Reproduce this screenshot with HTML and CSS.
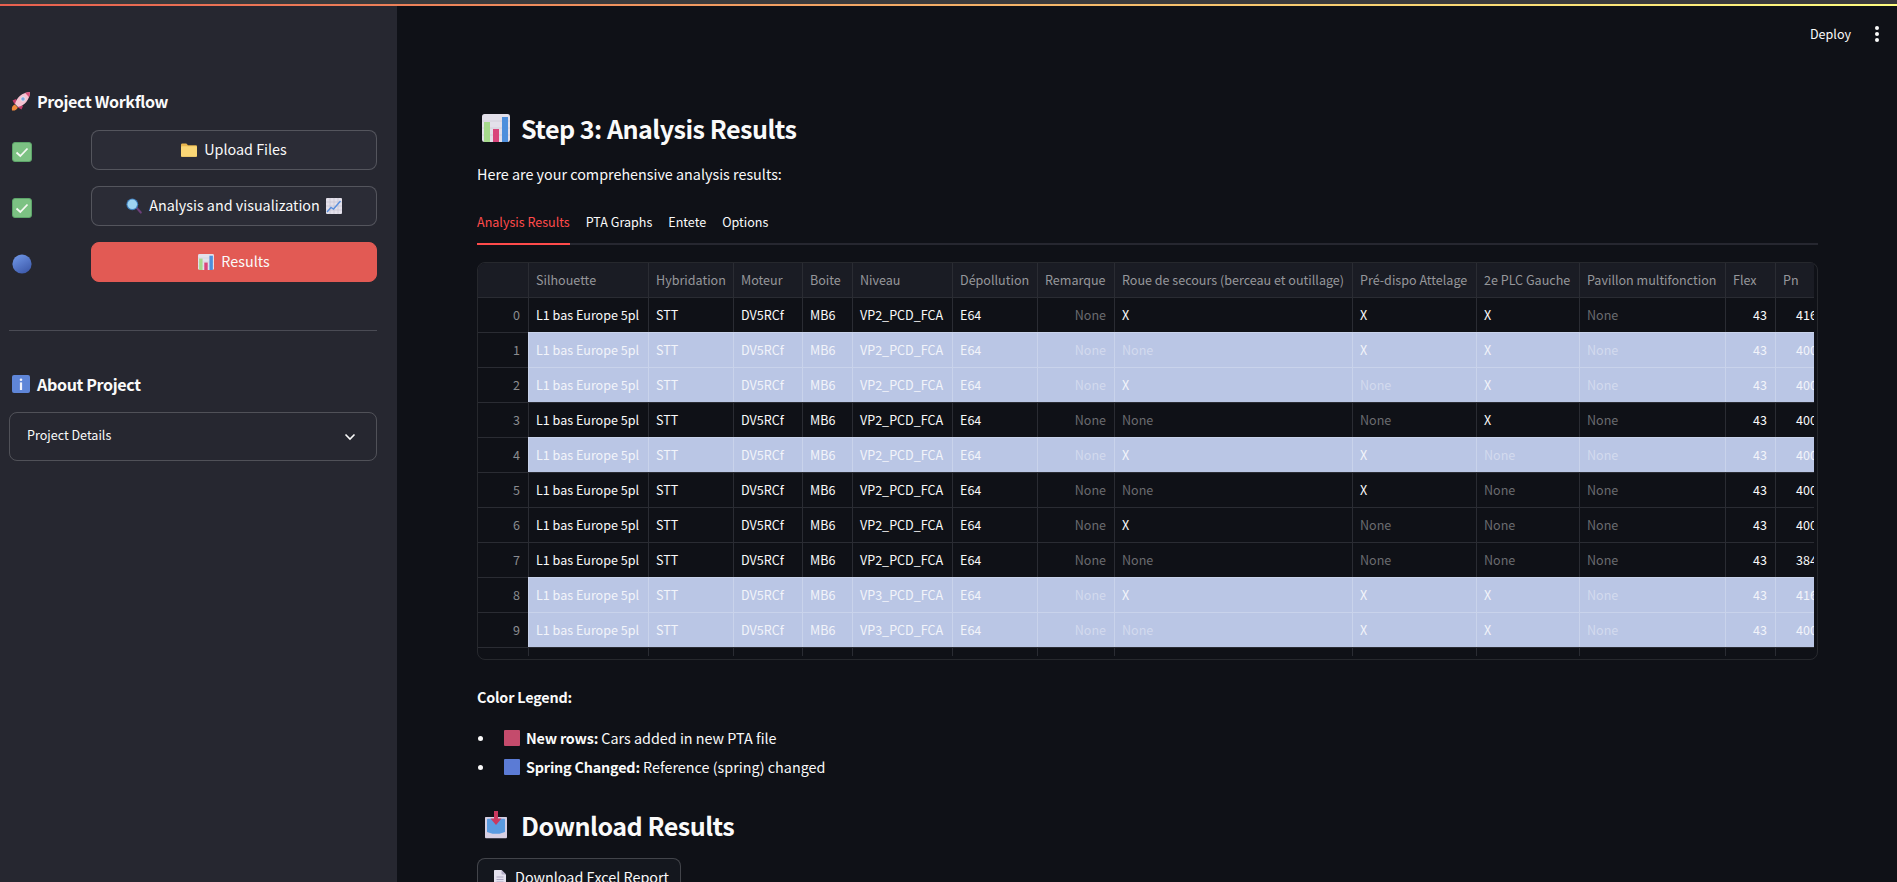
FILE: index.html
```html
<!DOCTYPE html>
<html lang="en">
  <head>
    <meta charset="UTF-8">
    <title>Step 3: Analysis Results</title>
    <link rel="stylesheet" href="styles.css">
  </head>
  <body>
    <!-- emoji drawn once, reused with <use> -->
    <svg class="icon-defs" width="0" height="0">
      <defs>
        <linearGradient id="orb" x1="0.2" y1="0" x2="0.8" y2="1">
          <stop offset="0" stop-color="#6f96e6"/>
          <stop offset="1" stop-color="#3b57a8"/>
        </linearGradient>
      </defs>
      <symbol id="i-rocket" viewBox="0 0 20 20">
        <path d="M1 19.500c-.6-2.800.4-5 2.800-6l3 3C6 18.800 3.800 19.900 1 19.500z" fill="#ef8a3c"/>
        <path d="M5 8 1.500 9.500l2 3.500 3-1zM12 15l-1.500 3.500-3.500-2 1-3z" fill="#c43d6a"/>
        <path d="M4 13C5.500 6.500 11 1.500 19 1c-.4 8-5.500 13.500-12 15z" fill="#f6c3d2"/>
        <path d="M14 1.800 19 1c-.1 1.900-.4 3.600-.9 5.200z" fill="#d9527c"/>
        <circle cx="12" cy="8" r="2.200" fill="#7fa8e0" stroke="#eee" stroke-width=".8"/>
      </symbol>
      <symbol id="i-check" viewBox="0 0 20 20">
        <rect x=".5" y=".5" width="19" height="19" rx="2.500" fill="#7cc283" stroke="#5da56a"/>
        <path d="M4.500 10.500 8.300 14 15.500 6.500" fill="none" stroke="#f4f8f2" stroke-width="1.800"/>
      </symbol>
      <symbol id="i-folder" viewBox="0 0 16 14">
        <path d="M0 2c0-.8.500-1.400 1.300-1.400h4L7 2.200h7.700c.8 0 1.300.5 1.300 1.300v9c0 .8-.5 1.300-1.300 1.300H1.300C.5 13.800 0 13.300 0 12.500z" fill="#e9b64e"/>
        <path d="M0 4.600c0-.8.500-1.300 1.300-1.300h13.400c.8 0 1.300.5 1.300 1.300v7.900c0 .8-.5 1.300-1.300 1.300H1.300C.5 13.800 0 13.300 0 12.500z" fill="#fad675"/>
      </symbol>
      <symbol id="i-search" viewBox="0 0 16 16">
        <path d="M9.500 10 11 8.800l4.600 5c.4.500.4 1-.1 1.500s-1 .4-1.500 0z" fill="#6b3f79"/>
        <circle cx="6.300" cy="6.300" r="5.900" fill="#3f7fbd"/>
        <circle cx="6.300" cy="6.300" r="4.800" fill="#9ed4f2"/>
      </symbol>
      <symbol id="i-trend" viewBox="0 0 16 16">
        <rect width="16" height="16" rx="1" fill="#e3e0ea"/>
        <path d="M0 4h16M0 8h16M0 12h16M4 0v16M8 0v16M12 0v16" stroke="#c3c0d0" stroke-width=".6"/>
        <path d="M1 14 5 9.500 7.500 11 14.500 3" fill="none" stroke="#5a8fdc" stroke-width="1.400"/>
      </symbol>
      <symbol id="i-bars" viewBox="0 0 28 28">
        <rect width="28" height="28" rx="2.500" fill="#e3e0ea"/>
        <path d="M0 7h28M0 14h28M0 21h28" stroke="#cfccd8" stroke-width=".8"/>
        <rect x="2" y="8" width="6" height="20" fill="#a6d98c"/>
        <rect x="11" y="15" width="6" height="13" fill="#d9467c"/>
        <rect x="20" y="3" width="6" height="25" fill="#4e8fdc"/>
      </symbol>
      <symbol id="i-info" viewBox="-1 -1 20 20">
        <rect width="18" height="18" rx="2" fill="#5f86d8"/>
        <circle cx="9" cy="4.800" r="1.300" fill="#f2f3fb"/>
        <rect x="7.900" y="7.400" width="2.200" height="7.600" fill="#f2f3fb"/>
      </symbol>
      <symbol id="i-tray" viewBox="0 -1 28 28">
        <path d="M3 6c0-.6.400-1 1-1h20c.6 0 1 .4 1 1v19c0 .8-.5 1.300-1.300 1.300H4.300C3.500 26.300 3 25.800 3 25z" fill="#d6cfe3"/>
        <path d="M5 7.500c0-.5.300-.8.800-.8h16.400c.5 0 .8.300.8.800V20l-5.500 1.800h-7L5 20z" fill="#5a9be0"/>
        <path d="M12 -1h4v7.500h3.500L14 13 8.500 6.500H12z" fill="#c9395f"/>
      </symbol>
      <symbol id="i-doc" viewBox="0 0 12 16">
        <path d="M0 1c0-.6.400-1 1-1h6.500L12 4.500V15c0 .6-.4 1-1 1H1c-.6 0-1-.4-1-1z" fill="#e4e1ee"/>
        <path d="M7.500 0 12 4.500H8.500c-.6 0-1-.4-1-1z" fill="#b5afc9"/>
        <path d="M2.500 7h7M2.500 9.500h7M2.500 12h7" stroke="#aca6c2"/>
      </symbol>
    </svg>

    <div class="browser-strip"></div>
    <div class="decoration"></div>

    <div class="app">
      <aside class="sidebar">
        <h3 class="side-title"><svg class="emoji-sm"><use href="#i-rocket"/></svg>Project Workflow</h3>

        <div class="steps">
          <svg class="step-status"><use href="#i-check"/></svg>
          <a class="btn"><svg class="emoji-btn"><use href="#i-folder"/></svg>Upload Files</a>

          <svg class="step-status"><use href="#i-check"/></svg>
          <a class="btn"><svg class="emoji-btn"><use href="#i-search"/></svg>Analysis and visualization<svg class="emoji-btn after"><use href="#i-trend"/></svg></a>

          <svg class="step-status" viewBox="0 0 20 20"><circle cx="10" cy="10" r="9.600" fill="url(#orb)"/></svg>
          <a class="btn btn-primary"><svg class="emoji-btn"><use href="#i-bars"/></svg>Results</a>
        </div>

        <hr class="side-rule">

        <h3 class="side-title about"><svg class="emoji-sm"><use href="#i-info"/></svg>About Project</h3>
        <div class="expander">
          <span class="expander-label">Project Details</span>
          <svg class="chevron" viewBox="0 0 12 8"><path d="M1.500 1.500 6 6l4.500-4.500" fill="none" stroke="#fafafa" stroke-width="1.600"/></svg>
        </div>
      </aside>

      <main class="content">
        <div class="topbar">
          <span class="deploy">Deploy</span>
          <svg class="kebab" viewBox="0 0 6 18"><circle cx="3" cy="3" r="2"/><circle cx="3" cy="9" r="2"/><circle cx="3" cy="15" r="2"/></svg>
        </div>

        <h2 class="page-title"><svg class="emoji-lg"><use href="#i-bars"/></svg>Step 3: Analysis Results</h2>
        <p class="lead">Here are your comprehensive analysis results:</p>

        <div class="tabs">
          <span class="tab active">Analysis Results</span>
          <span class="tab">PTA Graphs</span>
          <span class="tab">Entete</span>
          <span class="tab">Options</span>
        </div>

        <div class="grid-frame">
          <div class="grid-clip">
            <table class="grid">
              <colgroup>
                <col class="c-idx"><col class="c-sil"><col class="c-hyb"><col class="c-mot"><col class="c-boi"><col class="c-niv"><col class="c-dep"><col class="c-rem"><col class="c-rou"><col class="c-pre"><col class="c-plc"><col class="c-pav"><col class="c-flx"><col class="c-pn">
              </colgroup>
              <thead>
                <tr><th class="idx"></th><th>Silhouette</th><th>Hybridation</th><th>Moteur</th><th>Boite</th><th>Niveau</th><th>Dépollution</th><th>Remarque</th><th>Roue de secours (berceau et outillage)</th><th>Pré-dispo Attelage</th><th>2e PLC Gauche</th><th>Pavillon multifonction</th><th>Flex</th><th>Pn</th></tr>
              </thead>
              <tbody>
                <tr><td class="idx">0</td><td>L1 bas Europe 5pl</td><td>STT</td><td>DV5RCf</td><td>MB6</td><td>VP2_PCD_FCA</td><td>E64</td><td class="none r">None</td><td>X</td><td>X</td><td>X</td><td class="none">None</td><td class="r">43</td><td class="r">416</td></tr>
                <tr class="hl"><td class="idx">1</td><td>L1 bas Europe 5pl</td><td>STT</td><td>DV5RCf</td><td>MB6</td><td>VP2_PCD_FCA</td><td>E64</td><td class="none r">None</td><td class="none">None</td><td>X</td><td>X</td><td class="none">None</td><td class="r">43</td><td class="r">400</td></tr>
                <tr class="hl"><td class="idx">2</td><td>L1 bas Europe 5pl</td><td>STT</td><td>DV5RCf</td><td>MB6</td><td>VP2_PCD_FCA</td><td>E64</td><td class="none r">None</td><td>X</td><td class="none">None</td><td>X</td><td class="none">None</td><td class="r">43</td><td class="r">400</td></tr>
                <tr><td class="idx">3</td><td>L1 bas Europe 5pl</td><td>STT</td><td>DV5RCf</td><td>MB6</td><td>VP2_PCD_FCA</td><td>E64</td><td class="none r">None</td><td class="none">None</td><td class="none">None</td><td>X</td><td class="none">None</td><td class="r">43</td><td class="r">400</td></tr>
                <tr class="hl"><td class="idx">4</td><td>L1 bas Europe 5pl</td><td>STT</td><td>DV5RCf</td><td>MB6</td><td>VP2_PCD_FCA</td><td>E64</td><td class="none r">None</td><td>X</td><td>X</td><td class="none">None</td><td class="none">None</td><td class="r">43</td><td class="r">400</td></tr>
                <tr><td class="idx">5</td><td>L1 bas Europe 5pl</td><td>STT</td><td>DV5RCf</td><td>MB6</td><td>VP2_PCD_FCA</td><td>E64</td><td class="none r">None</td><td class="none">None</td><td>X</td><td class="none">None</td><td class="none">None</td><td class="r">43</td><td class="r">400</td></tr>
                <tr><td class="idx">6</td><td>L1 bas Europe 5pl</td><td>STT</td><td>DV5RCf</td><td>MB6</td><td>VP2_PCD_FCA</td><td>E64</td><td class="none r">None</td><td>X</td><td class="none">None</td><td class="none">None</td><td class="none">None</td><td class="r">43</td><td class="r">400</td></tr>
                <tr><td class="idx">7</td><td>L1 bas Europe 5pl</td><td>STT</td><td>DV5RCf</td><td>MB6</td><td>VP2_PCD_FCA</td><td>E64</td><td class="none r">None</td><td class="none">None</td><td class="none">None</td><td class="none">None</td><td class="none">None</td><td class="r">43</td><td class="r">384</td></tr>
                <tr class="hl"><td class="idx">8</td><td>L1 bas Europe 5pl</td><td>STT</td><td>DV5RCf</td><td>MB6</td><td>VP3_PCD_FCA</td><td>E64</td><td class="none r">None</td><td>X</td><td>X</td><td>X</td><td class="none">None</td><td class="r">43</td><td class="r">416</td></tr>
                <tr class="hl"><td class="idx">9</td><td>L1 bas Europe 5pl</td><td>STT</td><td>DV5RCf</td><td>MB6</td><td>VP3_PCD_FCA</td><td>E64</td><td class="none r">None</td><td class="none">None</td><td>X</td><td>X</td><td class="none">None</td><td class="r">43</td><td class="r">400</td></tr>
                <tr class="filler"><td class="idx"></td><td></td><td></td><td></td><td></td><td></td><td></td><td></td><td></td><td></td><td></td><td></td><td></td><td></td></tr>
              </tbody>
            </table>
          </div>
        </div>

        <p class="legend-title">Color Legend:</p>
        <ul class="legend">
          <li><span class="swatch swatch-new"></span><span><strong>New rows:</strong> Cars added in new PTA file</span></li>
          <li><span class="swatch swatch-spring"></span><span><strong>Spring Changed:</strong> Reference (spring) changed</span></li>
        </ul>

        <h2 class="page-title download"><svg class="emoji-lg"><use href="#i-tray"/></svg>Download Results</h2>
        <a class="btn btn-download"><svg class="emoji-doc"><use href="#i-doc"/></svg>Download Excel Report</a>
      </main>
    </div>
  </body>
</html>
```

FILE: styles.css
```css
* {
  box-sizing: border-box;
}

body {
  font-family: "Noto Sans CJK SC", "Noto Sans", sans-serif;
  margin: 0;
  height: 100vh;
  overflow: hidden;
  display: flex;
  flex-direction: column;
  background-color: #0f1117;
  color: #fafafa;
  font-size: 14.35px;
  line-height: 24px;
}

.icon-defs {
  display: block;
  height: 0;
}

.browser-strip {
  height: 4px;
  background-color: #3a3a3c;
}

.decoration {
  height: 2px;
  background: linear-gradient(90deg, #e8604f, #fffd80);
}

.app {
  flex: 1;
  display: flex;
  min-height: 0;
}

/* sidebar */
.sidebar {
  width: 397px;
  flex-shrink: 0;
  padding: 81px 20px 0 9px;
  background-color: #262730;
}

.side-title {
  display: flex;
  align-items: center;
  margin: 0;
  padding-left: 2px;
  font-size: 16.1px;
  font-weight: 600;
  letter-spacing: -0.37px;
  line-height: 28px;
}

.emoji-sm {
  width: 20px;
  height: 20px;
  margin-right: 6px;
}

.steps {
  display: grid;
  grid-template-columns: 82px 286px;
  row-gap: 16px;
  align-items: center;
  margin-top: 15px;
}

.step-status {
  width: 20px;
  height: 20px;
  margin: 4px 0 0 3px;
}

.btn {
  display: flex;
  align-items: center;
  justify-content: center;
  height: 40px;
  padding-bottom: 2px;
  border: 1px solid rgba(250, 250, 250, 0.2);
  border-radius: 8px;
  background-color: #2b2c36;
  color: #fafafa;
}

.btn-primary {
  border-color: #e25a54;
  background-color: #e25a54;
}

.emoji-btn {
  width: 16px;
  height: 16px;
  margin: 2px 7px 0 0;
}

.emoji-btn.after {
  margin: 2px 0 0 6px;
}

.side-rule {
  height: 1px;
  margin: 48px 0 39px;
  border: 0;
  background-color: #4a4b54;
}

.about {
  margin-bottom: 14px;
}

.expander {
  display: flex;
  align-items: center;
  justify-content: space-between;
  height: 49px;
  padding: 0 20px 0 17px;
  border: 1px solid rgba(250, 250, 250, 0.2);
  border-radius: 8px;
  font-size: 12.55px;
}

.expander-label {
  margin-bottom: 4px;
}

.chevron {
  width: 12px;
  height: 8px;
}

/* main column */
.content {
  flex: 1;
  min-width: 0;
  padding: 0 79px 0 80px;
}

.topbar {
  display: flex;
  align-items: center;
  justify-content: flex-end;
  height: 56px;
  margin-right: -79px;
  padding-right: 17px;
}

.deploy {
  font-size: 12.55px;
  margin-right: 23px;
}

.kebab {
  width: 6px;
  height: 18px;
  fill: #fafafa;
}

.page-title {
  display: flex;
  align-items: center;
  height: 44px;
  margin: 44px 0 12px;
  font-size: 25.1px;
  font-weight: 600;
  letter-spacing: -0.52px;
  line-height: 44px;
}

.emoji-lg {
  width: 28px;
  height: 28px;
  margin: 0 11px 0 5px;
}

.lead {
  margin: 0;
}

.tabs {
  display: flex;
  gap: 16px;
  margin-top: 14px;
  height: 45px;
  border-bottom: 2px solid #262730;
  font-size: 12.55px;
}

.tab {
  height: 45px;
  padding-top: 10px;
}

.tab.active {
  color: #ff4b4b;
  border-bottom: 2px solid #ff4b4b;
}

/* results table */
.grid-frame {
  height: 398px;
  margin-top: 17px;
  padding-right: 3px;
  border: 1px solid rgba(250, 250, 250, 0.1);
  border-radius: 8px;
}

.grid-clip {
  height: 100%;
  overflow: hidden;
  border-top-left-radius: 7px;
}

.grid {
  table-layout: fixed;
  width: 1347px;
  border-collapse: separate;
  border-spacing: 0;
  font-size: 12.55px;
  line-height: 20px;
}

.c-idx { width: 50px; }
.c-sil { width: 120px; }
.c-hyb { width: 85px; }
.c-mot { width: 69px; }
.c-boi { width: 50px; }
.c-niv { width: 100px; }
.c-dep { width: 85px; }
.c-rem { width: 77px; }
.c-rou { width: 238px; }
.c-pre { width: 124px; }
.c-plc { width: 103px; }
.c-pav { width: 146px; }
.c-flx { width: 50px; }
.c-pn { width: 50px; }

.grid th,
.grid td {
  height: 35px;
  padding: 0 8px 0 7px;
  overflow: hidden;
  white-space: nowrap;
  border-left: 1px solid #2a2c33;
  border-top: 1px solid #2a2c33;
  text-align: left;
}

.grid th {
  height: 34px;
  border-top: 0;
  background-color: #1a1c24;
  color: #96979b;
  font-weight: 400;
}

.grid .idx {
  border-left: 0;
  text-align: right;
  color: #8b8c90;
}

.grid .r {
  text-align: right;
}

.grid .none {
  color: #6b6c70;
}

.grid .hl td:not(.idx) {
  background-color: #bac6e5;
  border-left-color: #c9d3eb;
  border-top-color: #c9d3eb;
  color: #f2f4fa;
}

.grid .hl td.none {
  color: #d3daee;
}

.grid .filler td {
  height: 9px;
}

/* legend and download */
.legend-title {
  margin: 25px 0 17px;
  font-weight: 600;
  letter-spacing: -0.18px;
}

.legend {
  margin: 0;
  padding: 0;
  list-style: none;
}

.legend li {
  display: flex;
  align-items: center;
  margin-bottom: 5px;
}

.legend li::before {
  content: "";
  width: 5px;
  height: 5px;
  margin: 0 21px 0 1px;
  border-radius: 50%;
  background-color: #fafafa;
}

.legend strong {
  font-weight: 600;
  letter-spacing: -0.18px;
}

.swatch {
  width: 16px;
  height: 16px;
  margin-right: 6px;
  border-radius: 1px;
}

.swatch-new {
  background-color: #c44b6c;
}

.swatch-spring {
  background-color: #5b7bd5;
}

.download {
  margin: 24px 0 11px;
}

.btn-download {
  width: 204px;
  padding-left: 5px;
  background-color: #14171e;
}

.emoji-doc {
  width: 12px;
  height: 16px;
  margin: 2px 9px 0 0;
}
```
